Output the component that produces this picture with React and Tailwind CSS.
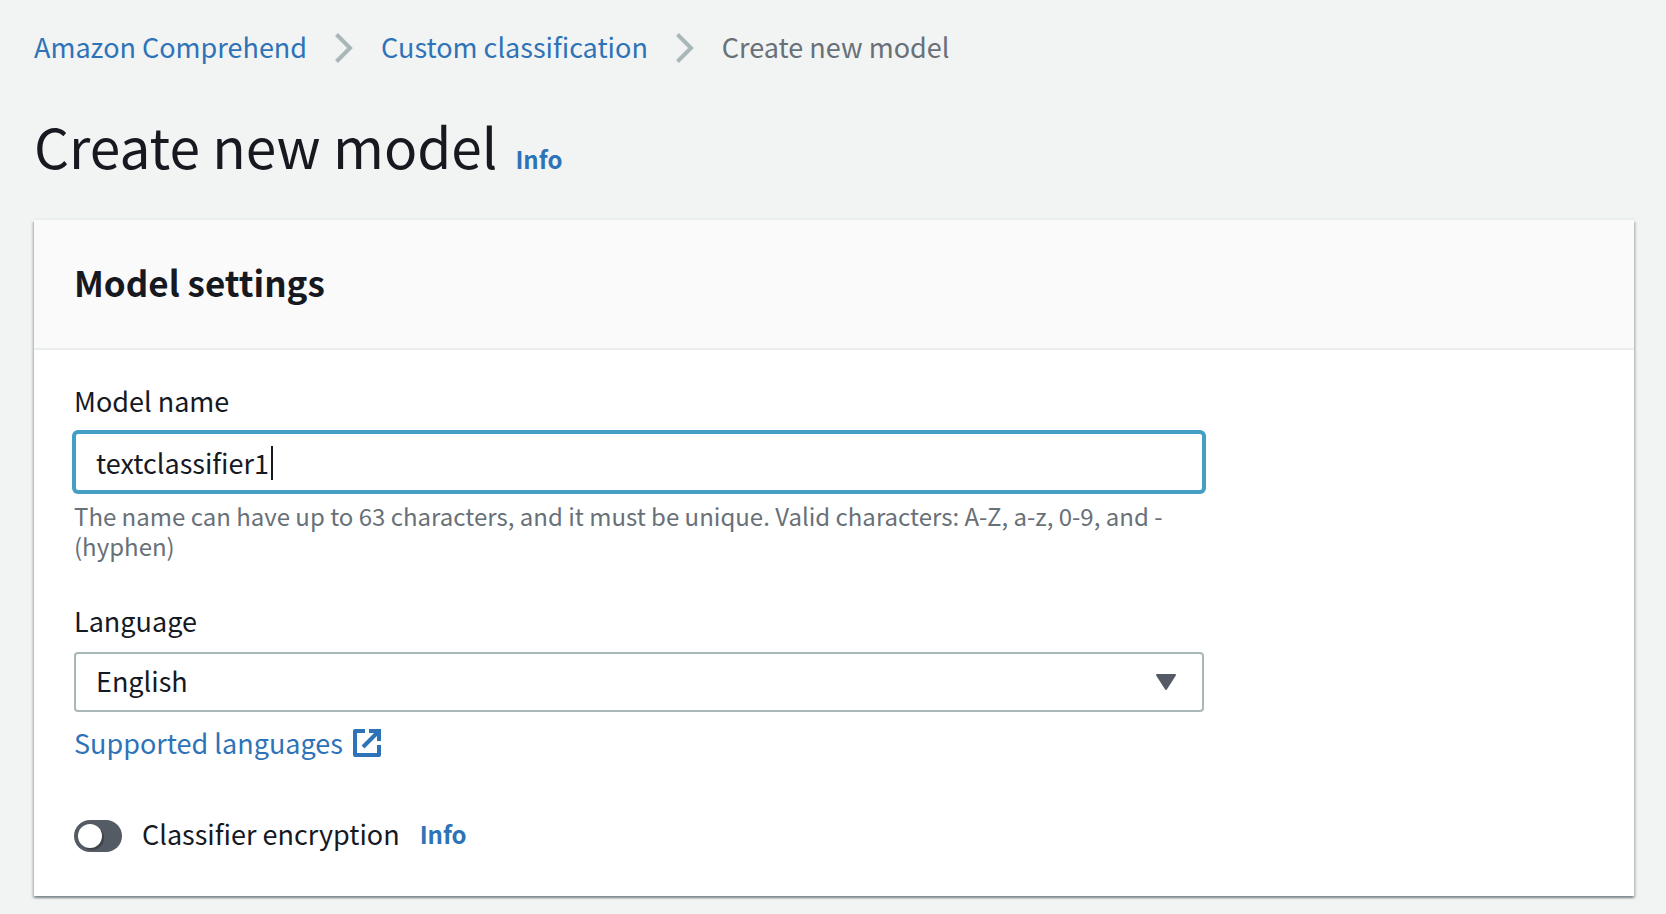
import { useState } from "react";

function Separator() {
  return (
    <svg className="h-8 w-5 shrink-0" viewBox="0 0 20 32" fill="none" aria-hidden="true">
      <path d="M2.5 1.5 L16 15 L2.5 28.5" stroke="#aab7b8" strokeWidth="4" />
    </svg>
  );
}

function ExternalIcon() {
  return (
    <svg className="size-7 shrink-0" viewBox="0 0 28 28" fill="none" stroke="currentColor" strokeWidth="4" aria-hidden="true">
      <path d="M12 2 H2 V26 H26 V16" strokeLinejoin="round" />
      <path d="M16 2 H26 V12" />
      <path d="M10 18 L25 3" />
    </svg>
  );
}

function InfoLink() {
  return (
    <a href="#info" className="text-2xl/9 font-bold text-[#2e73b8] hover:underline">
      Info
    </a>
  );
}

export default function App() {
  const [name, setName] = useState("textclassifier1");
  const [language, setLanguage] = useState("English");
  const [encrypted, setEncrypted] = useState(false);

  return (
    <div className="min-h-screen bg-[#f2f3f3] pt-[29px] pr-8 pb-[18px] pl-[34px] font-['Noto_Sans_CJK_SC','Noto_Sans',sans-serif] text-[27px]/9 text-[#16191f]">
      <nav aria-label="Breadcrumbs">
        <ol className="flex flex-wrap items-end gap-x-[27px]">
          <li className="flex items-end gap-[27px]">
            <a href="#comprehend" className="text-[#2e73b8] hover:underline">Amazon Comprehend</a>
            <Separator />
          </li>
          <li className="flex items-end gap-[27px]">
            <a href="#classification" className="text-[#2e73b8] hover:underline">Custom classification</a>
            <Separator />
          </li>
          <li className="text-[#687078]" aria-current="page">Create new model</li>
        </ol>
      </nav>

      <header className="mt-11 flex items-baseline gap-[18px]">
        <h1 className="text-[55px]/[72px]">Create new model</h1>
        <InfoLink />
      </header>

      <section className="mt-[39px] bg-white shadow-[0_-2px_0_0_#eaeded,0_2px_2px_0_rgba(0,28,36,0.3),2px_2px_2px_0_rgba(0,28,36,0.15),-2px_2px_2px_0_rgba(0,28,36,0.15)]">
        <div className="border-b-2 border-[#eaeded] bg-[#fafafa] px-10 pt-[38px] pb-[42px]">
          <h2 className="text-[35px]/[48px] font-bold">Model settings</h2>
        </div>

        <form className="px-10 pt-[33px] pb-11" onSubmit={(e) => e.preventDefault()}>
          <div className="w-3/4 pr-[10px]">
            <label htmlFor="model-name" className="block">Model name</label>
            <div className="mt-[13px] flex h-15 items-center rounded-sm border-2 border-[#459fc5] bg-white px-5 pt-0.5 ring-2 ring-[#459fc5]">
              <input
                id="model-name"
                type="text"
                value={name}
                onChange={(e) => setName(e.target.value)}
                aria-describedby="model-name-hint"
                className="field-sizing-content max-w-full min-w-px caret-transparent outline-none"
              />
              <span className="ml-0.5 h-[34px] w-0.5 shrink-0 bg-[#16191f]" aria-hidden="true" />
            </div>
            <p id="model-name-hint" className="mt-[9px] text-2xl/[30px] text-[#687078]">
              The name can have up to 63 characters, and it must be unique. Valid characters: A-Z, a-z, 0-9, and - (hyphen)
            </p>

            <label htmlFor="language" className="mt-[42px] block">Language</label>
            <div className="mt-[13px] grid items-center">
              <select
                id="language"
                value={language}
                onChange={(e) => setLanguage(e.target.value)}
                className="col-start-1 row-start-1 h-15 w-full appearance-none rounded-sm border-2 border-[#aab7b8] bg-white px-5 pb-0.5"
              >
                <option>English</option>
                <option>Spanish</option>
                <option>German</option>
              </select>
              <svg className="pointer-events-none col-start-1 row-start-1 mr-7 h-4 w-5 justify-self-end" viewBox="0 0 20 16" fill="#545b64" stroke="#545b64" strokeWidth="2" strokeLinejoin="round" aria-hidden="true">
                <path d="M1 1 H19 L10 15 Z" />
              </svg>
            </div>
            <a href="#languages" className="mt-[13px] flex w-fit items-center gap-[10px] text-[#2e73b8] hover:underline">
              Supported languages
              <ExternalIcon />
            </a>
          </div>

          <div className="mt-[55px] flex items-end gap-5">
            <label className="flex items-end gap-5">
              <input
                type="checkbox"
                role="switch"
                checked={encrypted}
                onChange={(e) => setEncrypted(e.target.checked)}
                className="flex h-8 w-12 shrink-0 appearance-none items-center rounded-full bg-[#545b64] px-1 before:size-6 before:rounded-full before:bg-white before:shadow-[2px_2px_0_0_rgba(0,0,0,0.25)] checked:justify-end checked:bg-[#2e73b8]"
              />
              Classifier encryption
            </label>
            <InfoLink />
          </div>
        </form>
      </section>
    </div>
  );
}
